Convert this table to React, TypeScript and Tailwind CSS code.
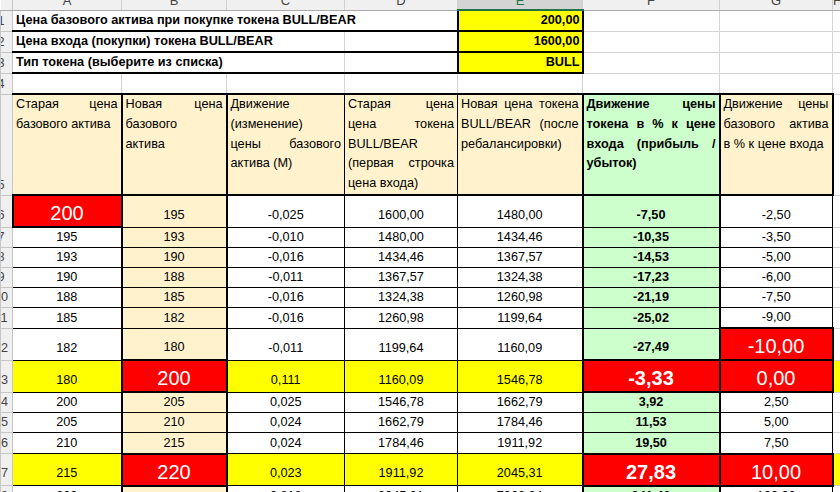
import React from 'react';

// Excel-like sheet: Arial-metric font for the cells
const CELL_FONT = "font-['Liberation_Sans',Arial,sans-serif]";

const GRID = 'border border-[#d4d4d4]';
const HEAD_BG = 'bg-[#f0f0f0]';
const TXT = 'text-[12.7px] leading-[19px]';

type Fill = 'white' | 'yellow' | 'red' | 'peach' | 'green';

const fillClass: Record<Fill, string> = {
  white: 'bg-white',
  yellow: 'bg-[#ffff00]',
  red: 'bg-[#ff0000]',
  peach: 'bg-[#fff2cc]',
  green: 'bg-[#ccffcc]',
};

interface BodyRow {
  n: number;
  tall?: boolean;
  hl?: boolean; // yellow row
  a: string;
  b: string;
  c: string;
  d: string;
  e: string;
  f: string;
  g: string;
  red?: string[]; // which columns are red with big white text
}

const rows: BodyRow[] = [
  { n: 6, tall: true, a: '200', b: '195', c: '-0,025', d: '1600,00', e: '1480,00', f: '-7,50', g: '-2,50', red: ['a'] },
  { n: 7, a: '195', b: '193', c: '-0,010', d: '1480,00', e: '1434,46', f: '-10,35', g: '-3,50' },
  { n: 8, a: '193', b: '190', c: '-0,016', d: '1434,46', e: '1367,57', f: '-14,53', g: '-5,00' },
  { n: 9, a: '190', b: '188', c: '-0,011', d: '1367,57', e: '1324,38', f: '-17,23', g: '-6,00' },
  { n: 10, a: '188', b: '185', c: '-0,016', d: '1324,38', e: '1260,98', f: '-21,19', g: '-7,50' },
  { n: 11, a: '185', b: '182', c: '-0,016', d: '1260,98', e: '1199,64', f: '-25,02', g: '-9,00' },
  { n: 12, tall: true, a: '182', b: '180', c: '-0,011', d: '1199,64', e: '1160,09', f: '-27,49', g: '-10,00', red: ['g'] },
  { n: 13, tall: true, hl: true, a: '180', b: '200', c: '0,111', d: '1160,09', e: '1546,78', f: '-3,33', g: '0,00', red: ['b', 'f', 'g'] },
  { n: 14, a: '200', b: '205', c: '0,025', d: '1546,78', e: '1662,79', f: '3,92', g: '2,50' },
  { n: 15, a: '205', b: '210', c: '0,024', d: '1662,79', e: '1784,46', f: '11,53', g: '5,00' },
  { n: 16, a: '210', b: '215', c: '0,024', d: '1784,46', e: '1911,92', f: '19,50', g: '7,50' },
  { n: 17, tall: true, hl: true, a: '215', b: '220', c: '0,023', d: '1911,92', e: '2045,31', f: '27,83', g: '10,00', red: ['b', 'f', 'g'] },
  { n: 18, a: '220', b: '', c: '0,818', d: '2045,31', e: '7063,34', f: '341,46', g: '100,00' },
];

const RowHead = ({ n, tall }: { n: number; tall?: boolean }) => (
  <td className={`${HEAD_BG} border border-[#c6c6c6] p-0 align-bottom`}>
    <div className="w-[12px] overflow-hidden">
      <div className={`w-[30px] -ml-[15px] text-center ${TXT} text-[#444] ${tall ? 'pb-[2px]' : ''}`}>{n}</div>
    </div>
  </td>
);

const ColHead = ({ l, active }: { l: string; active?: boolean }) => (
  <td
    className={`p-0 border-r border-r-[#d0d0d0] ${
      active
        ? 'bg-[#d4d4d4] border-b-2 border-b-[#217346] text-[#217346]'
        : `${HEAD_BG} border-b border-b-[#ababab] text-[#444]`
    }`}
  >
    <div className="h-[9px] overflow-hidden text-center">
      <div className="text-[13px] leading-[14px] -mt-[6px]">{l}</div>
    </div>
  </td>
);

// justified header text, one div per wrapped line like Excel shows it
const Justified = ({ lines }: { lines: string[] }) => (
  <>
    {lines.map((l, i) => (
      <div
        key={i}
        className={`whitespace-nowrap ${i < lines.length - 1 ? 'text-justify [text-align-last:justify]' : ''}`}
      >
        {l}
      </div>
    ))}
  </>
);

const Cell = ({
  v,
  fill,
  border,
  big,
  bold,
  tall,
}: {
  v: string;
  fill: Fill;
  border: string;
  big?: boolean;
  bold?: boolean;
  tall?: boolean;
}) => (
  <td className={`${fillClass[fill]} ${border} p-0 align-bottom text-center`}>
    {big ? (
      <div className={`text-white text-[20px] leading-[26px] ${bold ? 'font-bold' : ''}`}>{v}</div>
    ) : (
      <div className={`${TXT} ${bold ? 'font-bold' : ''} ${tall ? 'pb-[2px]' : ''}`}>{v}</div>
    )}
  </td>
);

export default function App() {
  const hdr = 'border-y-2 border-black align-top p-0 px-[3px] text-[12.7px] leading-[19.8px]';
  const topText = `p-0 px-[3px] align-bottom font-bold ${TXT} whitespace-nowrap`;
  const input = `bg-[#ffff00] border-2 border-black p-0 pr-[2px] align-bottom text-right font-bold ${TXT}`;

  return (
    <div className={`w-[840px] h-[492px] overflow-hidden bg-white text-black ${CELL_FONT}`}>
      <table className="table-fixed border-collapse w-[840px]">
        <colgroup>
          <col className="w-[12px]" />
          <col className="w-[109px]" />
          <col className="w-[105px]" />
          <col className="w-[118px]" />
          <col className="w-[113px]" />
          <col className="w-[125px]" />
          <col className="w-[137px]" />
          <col className="w-[113px]" />
          <col className="w-[8px]" />
        </colgroup>
        <tbody>
          {/* column letters, cut off at the top of the window */}
          <tr className="h-[10px]">
            <td className={`${HEAD_BG} border-r border-r-[#c6c6c6] border-b border-b-[#ababab] p-0`} />
            <ColHead l="A" />
            <ColHead l="B" />
            <ColHead l="C" />
            <ColHead l="D" />
            <ColHead l="E" active />
            <ColHead l="F" />
            <ColHead l="G" />
            <ColHead l="H" />
          </tr>

          {/* inputs */}
          <tr className="h-[21px]">
            <RowHead n={1} />
            <td colSpan={4} className={`border-b-2 border-b-black ${topText}`}>
              Цена базового актива при покупке токена BULL/BEAR
            </td>
            <td className={input}>200,00</td>
            <td className={GRID} />
            <td className={GRID} />
            <td className={GRID} />
          </tr>
          <tr className="h-[21px]">
            <RowHead n={2} />
            <td colSpan={3} className={`border-y-2 border-black ${topText}`}>
              Цена входа (покупки) токена BULL/BEAR
            </td>
            <td className="border-l border-l-[#d4d4d4] border-y-2 border-y-black p-0" />
            <td className={input}>1600,00</td>
            <td className={GRID} />
            <td className={GRID} />
            <td className={GRID} />
          </tr>
          <tr className="h-[21px]">
            <RowHead n={3} />
            <td colSpan={3} className={`border-y-2 border-black ${topText}`}>
              Тип токена (выберите из списка)
            </td>
            <td className="border-l border-l-[#d4d4d4] border-y-2 border-y-black p-0" />
            <td className={input}>BULL</td>
            <td className={GRID} />
            <td className={GRID} />
            <td className={GRID} />
          </tr>
          <tr className="h-[21px]">
            <RowHead n={4} />
            <td className={GRID} />
            <td className={GRID} />
            <td className={GRID} />
            <td className={GRID} />
            <td className={GRID} />
            <td className={GRID} />
            <td className={GRID} />
            <td className={GRID} />
          </tr>

          {/* table header */}
          <tr className="h-[101px]">
            <RowHead n={5} />
            <td className={`${hdr} bg-[#fff2cc] border-r-2`}>
              <Justified lines={['Старая цена', 'базового актива']} />
            </td>
            <td className={`${hdr} bg-[#fff2cc] border-x-2`}>
              <Justified lines={['Новая цена', 'базового', 'актива']} />
            </td>
            <td className={`${hdr} bg-[#fff2cc] border-x`}>
              <Justified lines={['Движение', '(изменение)', 'цены базового', 'актива (М)']} />
            </td>
            <td className={`${hdr} bg-[#fff2cc] border-x`}>
              <Justified lines={['Старая цена', 'цена токена', 'BULL/BEAR', '(первая строчка', 'цена входа)']} />
            </td>
            <td className={`${hdr} bg-[#fff2cc] border-l border-r-2`}>
              <Justified lines={['Новая цена токена', 'BULL/BEAR (после', 'ребалансировки)']} />
            </td>
            <td className={`${hdr} bg-[#ccffcc] border-x-2 font-bold`}>
              <Justified lines={['Движение цены', 'токена в % к цене', 'входа (прибыль /', 'убыток)']} />
            </td>
            <td className={`${hdr} bg-[#fff2cc] border-x-2`}>
              <Justified lines={['Движение цены', 'базового актива', 'в % к цене входа']} />
            </td>
            <td className={GRID} />
          </tr>

          {rows.map((r) => {
            const red = r.red ?? [];
            const base: Fill = r.hl ? 'yellow' : 'white';
            const pick = (k: string, normal: Fill): Fill => (red.includes(k) ? 'red' : normal);
            const bd = (k: string, normal: string) => (red.includes(k) ? 'border-2 border-black' : normal);
            const h = r.n === 16 ? 'h-[21px]' : r.tall ? 'h-[32px]' : 'h-[20px]';
            return (
              <tr key={r.n} className={h}>
                <RowHead n={r.n} tall={r.tall} />
                <Cell v={r.a} fill={pick('a', base)} border={bd('a', 'border border-black border-r-2')} big={red.includes('a')} tall={r.tall} />
                <Cell v={r.b} fill={pick('b', 'peach')} border={bd('b', 'border-y border-x-2 border-black')} big={red.includes('b')} tall={r.tall} />
                <Cell v={r.c} fill={base} border="border border-black" tall={r.tall} />
                <Cell v={r.d} fill={base} border="border border-black" tall={r.tall} />
                <Cell v={r.e} fill={base} border="border border-black border-r-2" tall={r.tall} />
                <Cell v={r.f} fill={pick('f', 'green')} border={bd('f', 'border-y border-x-2 border-black')} big={red.includes('f')} bold tall={r.tall} />
                <Cell v={r.g} fill={pick('g', base)} border={bd('g', 'border border-black')} big={red.includes('g')} tall={r.tall} />
                <td className={`${r.hl ? 'bg-[#ffff00]' : 'bg-white'} ${GRID} p-0`} />
              </tr>
            );
          })}
        </tbody>
      </table>
    </div>
  );
}
